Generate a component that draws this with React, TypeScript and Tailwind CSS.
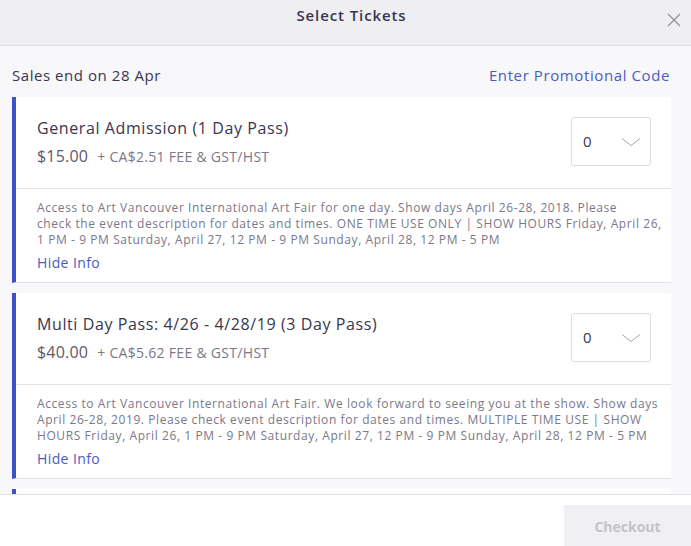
const tickets = [
  {
    name: "General Admission (1 Day Pass)",
    price: "$15.00",
    fee: "+ CA$2.51 FEE & GST/HST",
    info: [
      "Access to Art Vancouver International Art Fair for one day. Show days April 26-28, 2018. Please",
      "check the event description for dates and times. ONE TIME USE ONLY | SHOW HOURS Friday, April 26,",
      "1 PM - 9 PM Saturday, April 27, 12 PM - 9 PM Sunday, April 28, 12 PM - 5 PM",
    ],
  },
  {
    name: "Multi Day Pass: 4/26 - 4/28/19 (3 Day Pass)",
    price: "$40.00",
    fee: "+ CA$5.62 FEE & GST/HST",
    info: [
      "Access to Art Vancouver International Art Fair. We look forward to seeing you at the show. Show days",
      "April 26-28, 2019. Please check event description for dates and times. MULTIPLE TIME USE | SHOW",
      "HOURS Friday, April 26, 1 PM - 9 PM Saturday, April 27, 12 PM - 9 PM Sunday, April 28, 12 PM - 5 PM",
    ],
  },
];

function TicketCard({ t }: { t: (typeof tickets)[number] }) {
  return (
    <section className="mr-[20px] shrink-0 border-b border-l-[4px] border-b-[#e3e2e8] border-l-[#3d52c4] bg-white">
      <div className="flex items-start justify-between border-b border-[#e3e2e8] pb-[22px] pl-[21px] pr-[20px] pt-[20px]">
        <div className="pt-[1px]">
          <h2 className="text-[16px] leading-[20px] tracking-[0.6px] text-[#39364f]">{t.name}</h2>
          <p className="mt-[9px] flex items-baseline gap-[9px] leading-[18px]">
            <span className="text-[16px] tracking-[0.2px] text-[#5b5a6b]">{t.price}</span>
            <span className="text-[14px] tracking-[0.3px] text-[#7a7889]">{t.fee}</span>
          </p>
        </div>
        <div className="flex h-[49px] w-[80px] items-center justify-between rounded-[3px] border border-[#dcdbe1] pl-[11px] pr-[9px] text-[15px] text-[#39364f]">
          <span>0</span>
          <svg width="20" height="10" viewBox="0 0 20 10" fill="none" stroke="#a5a4b0" strokeWidth="1">
            <path d="M1 1.5 L10 8.5 L19 1.5" />
          </svg>
        </div>
      </div>
      <div className="pb-[8px] pl-[21px] pr-[20px] pt-[11px]">
        {t.info.map((line) => (
          <p key={line} className="whitespace-nowrap text-[12px] leading-[16px] tracking-[0.58px] text-[#7a7889]">
            {line}
          </p>
        ))}
        <button type="button" className="mt-[5px] text-[14px] leading-[20px] tracking-[0.4px] text-[#4a5cc2]">
          Hide Info
        </button>
      </div>
    </section>
  );
}

export default function App() {
  return (
    <main
      className="flex h-[546px] w-[691px] flex-col overflow-hidden bg-white"
      style={{ fontFamily: '"Open Sans", "Liberation Sans", Arial, sans-serif' }}
    >
      <header className="relative flex h-[46px] shrink-0 items-start justify-center border-b border-[#dedde3] bg-[#efeef3] pt-[5px]">
        <h1 className="pl-[12px] text-[15px] font-semibold leading-[20px] tracking-[0.9px] text-[#39364f]">Select Tickets</h1>
        <button type="button" className="absolute right-[9px] top-[12px] p-[1px]">
          <svg width="14" height="14" viewBox="0 0 14 14" stroke="#8d8c99" strokeWidth="1.1">
            <path d="M1 1 L13 13 M13 1 L1 13" />
          </svg>
        </button>
      </header>

      <div className="flex min-h-0 flex-1 flex-col gap-[10px] overflow-hidden bg-[#f8f7fa] pl-[12px]">
        <div className="flex h-[41px] shrink-0 items-end justify-between pb-[2px] pr-[21px]">
          <span className="text-[15px] leading-[20px] tracking-[0.55px] text-[#39364f]">Sales end on 28 Apr</span>
          <button type="button" className="text-[15px] leading-[20px] tracking-[0.6px] text-[#4a5cc2]">
            Enter Promotional Code
          </button>
        </div>
        {tickets.map((t) => (
          <TicketCard key={t.name} t={t} />
        ))}
        <section className="mr-[20px] h-[40px] shrink-0 border-l-[4px] border-l-[#3d52c4] bg-white" />
      </div>

      <footer className="flex h-[52px] shrink-0 items-start justify-end border-t border-[#e1e0e6] bg-white pt-[10px]">
        <button type="button" className="h-[42px] w-[127px] bg-[#f0eff3] text-[14px] font-bold text-[#c4c3cb]">
          Checkout
        </button>
      </footer>
    </main>
  );
}
